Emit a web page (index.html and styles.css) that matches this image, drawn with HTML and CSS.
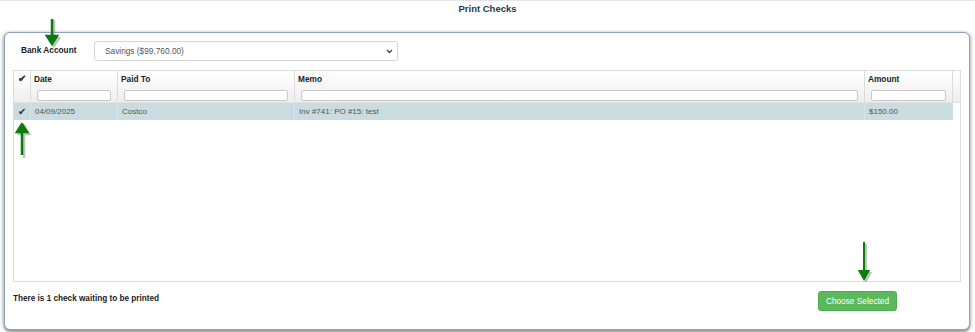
FILE: index.html
```html
<!DOCTYPE html>
<html lang="en">
<head>
    <meta charset="UTF-8">
    <meta name="viewport" content="width=device-width, initial-scale=1.0">
    <title>Print Checks</title>
    <link rel="stylesheet" href="styles.css">
</head>
<body>
    <div class="page">
        <h1 class="title">Print Checks</h1>

        <div class="panel">
            <div class="bank-row">
                <label class="bank-label">Bank Account</label>
                <div class="select">
                    <span>Savings ($99,760.00)</span>
                    <svg class="caret" width="7" height="5" viewBox="0 0 7 5"><path d="M1 1 L3.5 3.5 L6 1" fill="none" stroke="#444" stroke-width="1.3"/></svg>
                </div>
            </div>

            <div class="grid">
                <div class="grid-head">
                    <div class="hcell col-check"><span class="tick">&#10004;</span></div>
                    <div class="hcell col-date">Date<input class="filter" type="text"></div>
                    <div class="hcell col-paid">Paid To<input class="filter" type="text"></div>
                    <div class="hcell col-memo">Memo<input class="filter" type="text"></div>
                    <div class="hcell col-amount">Amount<input class="filter" type="text"></div>
                    <div class="hcell col-gutter"></div>
                </div>
                <div class="grid-body">
                    <div class="grid-row selected">
                        <div class="cell col-check"><span class="tick">&#10004;</span></div>
                        <div class="cell col-date">04/09/2025</div>
                        <div class="cell col-paid">Costco</div>
                        <div class="cell col-memo">Inv #741: PO #15: test</div>
                        <div class="cell col-amount">$150.00</div>
                    </div>
                </div>
            </div>

            <div class="footer">
                <span class="waiting">There is 1 check waiting to be printed</span>
                <button class="btn-choose">Choose Selected</button>
            </div>
        </div>

        <!-- стрілки-підказки поверх форми -->
        <svg class="arrow arrow-bank" width="16" height="30" viewBox="0 0 16 30">
            <path d="M9 1 V20 M4 19 L9 27 L14 19 Z" stroke="#999" stroke-width="2.5" fill="#999" opacity="0.6"/>
            <path d="M7 0 V18 M2 17 L7 25 L12 17 Z" stroke="#0c7d0c" stroke-width="2.5" fill="#0c7d0c"/>
        </svg>
        <svg class="arrow arrow-row" width="16" height="36" viewBox="0 0 16 36">
            <path d="M9 12 V35 M4 11 L9 3 L14 11 Z" stroke="#999" stroke-width="2.5" fill="#999" opacity="0.6"/>
            <path d="M7 10 V32 M2 9 L7 1 L12 9 Z" stroke="#0c7d0c" stroke-width="2.5" fill="#0c7d0c"/>
        </svg>
        <svg class="arrow arrow-btn" width="16" height="42" viewBox="0 0 16 42">
            <path d="M9 2 V32 M4.5 31 L9 39 L13.5 31 Z" stroke="#999" stroke-width="2" fill="#999" opacity="0.6"/>
            <path d="M7 0 V30 M2.5 29 L7 37 L11.5 29 Z" stroke="#0c7d0c" stroke-width="2" fill="#0c7d0c"/>
        </svg>
    </div>
</body>
</html>
```

FILE: styles.css
```css
body {
    margin: 0;
    font-family: "Liberation Sans", Arial, sans-serif;
    background: #fff;
}
.page {
    position: relative;
    width: 975px;
    height: 332px;
    border-top: 1px solid #e4e4e4;
    box-sizing: border-box;
}
.title {
    margin: 0;
    padding-top: 2px;
    height: 29px;
    font-size: 9.5px;
    line-height: 12px;
    font-weight: bold;
    color: #1d3c4c;
    text-align: center;
}
.panel {
    margin-left: 4px;
    width: 966px;
    height: 298px;
    box-sizing: border-box;
    border: 1px solid #8da3b8;
    border-radius: 6px;
    padding: 8px 8px 0 8px;
    box-shadow: 0 2px 2px #9a9a9a, -2px 0 3px #d0d0d0, 2px 0 3px #d8d8d8;
    background: #fff;
}
.bank-row {
    display: flex;
    align-items: center;
    height: 20px;
}
.bank-label {
    width: 73px;
    padding-left: 8px;
    font-size: 8.3px;
    font-weight: bold;
    color: #222;
    margin-top: -3px;
}
.select {
    width: 304px;
    height: 20px;
    box-sizing: border-box;
    border: 1px solid #d4d4d4;
    border-radius: 3px;
    display: flex;
    align-items: center;
    justify-content: space-between;
    padding: 0 4px 0 10px;
    font-size: 8.3px;
    color: #555;
}
.grid {
    margin-top: 9px;
    border: 1px solid #dcdcdc;
    height: 212px;
    box-sizing: border-box;
}
.grid-head {
    display: flex;
    height: 31px;
    background: linear-gradient(#fff, #eeeeee);
    border-bottom: 1px solid #e2e2e2;
}
.hcell {
    display: flex;
    flex-direction: column;
    font-size: 8.3px;
    font-weight: bold;
    color: #222;
    padding: 3px 4px 0 3px;
    box-sizing: border-box;
    border-right: 1px solid #dcdcdc;
}
.hcell:last-child {
    border-right: none;
}
.filter {
    margin-top: 6px;
    height: 11px;
    box-sizing: border-box;
    border: 1px solid #c8c8c8;
    border-radius: 2px;
    padding: 0;
    background: #fff;
}
.col-check { width: 17px; }
.col-date { width: 87px; }
.col-paid { width: 177px; }
.col-memo { width: 570px; }
.col-amount { width: 88px; }
.col-gutter { flex: 1; }
.hcell .filter { margin-left: 3px; width: calc(100% - 5px); }
.hcell.col-check {
    align-items: center;
    padding: 3px 0 0 0;
}
.tick {
    font-size: 10px;
    color: #333;
    line-height: 10px;
}
.grid-row {
    display: flex;
    height: 17px;
    width: 939px;
}
.grid-row.selected {
    background: #c9dce0;
}
.cell {
    font-size: 8px;
    color: #555;
    line-height: 17px;
    padding-left: 4px;
    box-sizing: border-box;
    border-right: 1px solid #d9e6e8;
}
.cell:last-child {
    border-right: none;
}
.cell.col-check {
    padding-left: 0;
    text-align: center;
}
.cell .tick {
    line-height: 17px;
}
.footer {
    display: flex;
    justify-content: space-between;
    align-items: center;
    margin-top: 9px;
    padding-right: 64px;
}
.waiting {
    font-size: 8.2px;
    font-weight: bold;
    color: #222;
    margin-top: -6px;
}
.btn-choose {
    width: 79px;
    height: 20px;
    background: #5cb85c;
    border: 1px solid #4cae4c;
    border-radius: 3px;
    color: #fff;
    font-family: "Liberation Sans", Arial, sans-serif;
    font-size: 8.3px;
    padding: 0;
}
.arrow {
    position: absolute;
}
.arrow-bank { left: 45px; top: 18px; }
.arrow-row { left: 15px; top: 122px; }
.arrow-btn { left: 857px; top: 241px; }
```
